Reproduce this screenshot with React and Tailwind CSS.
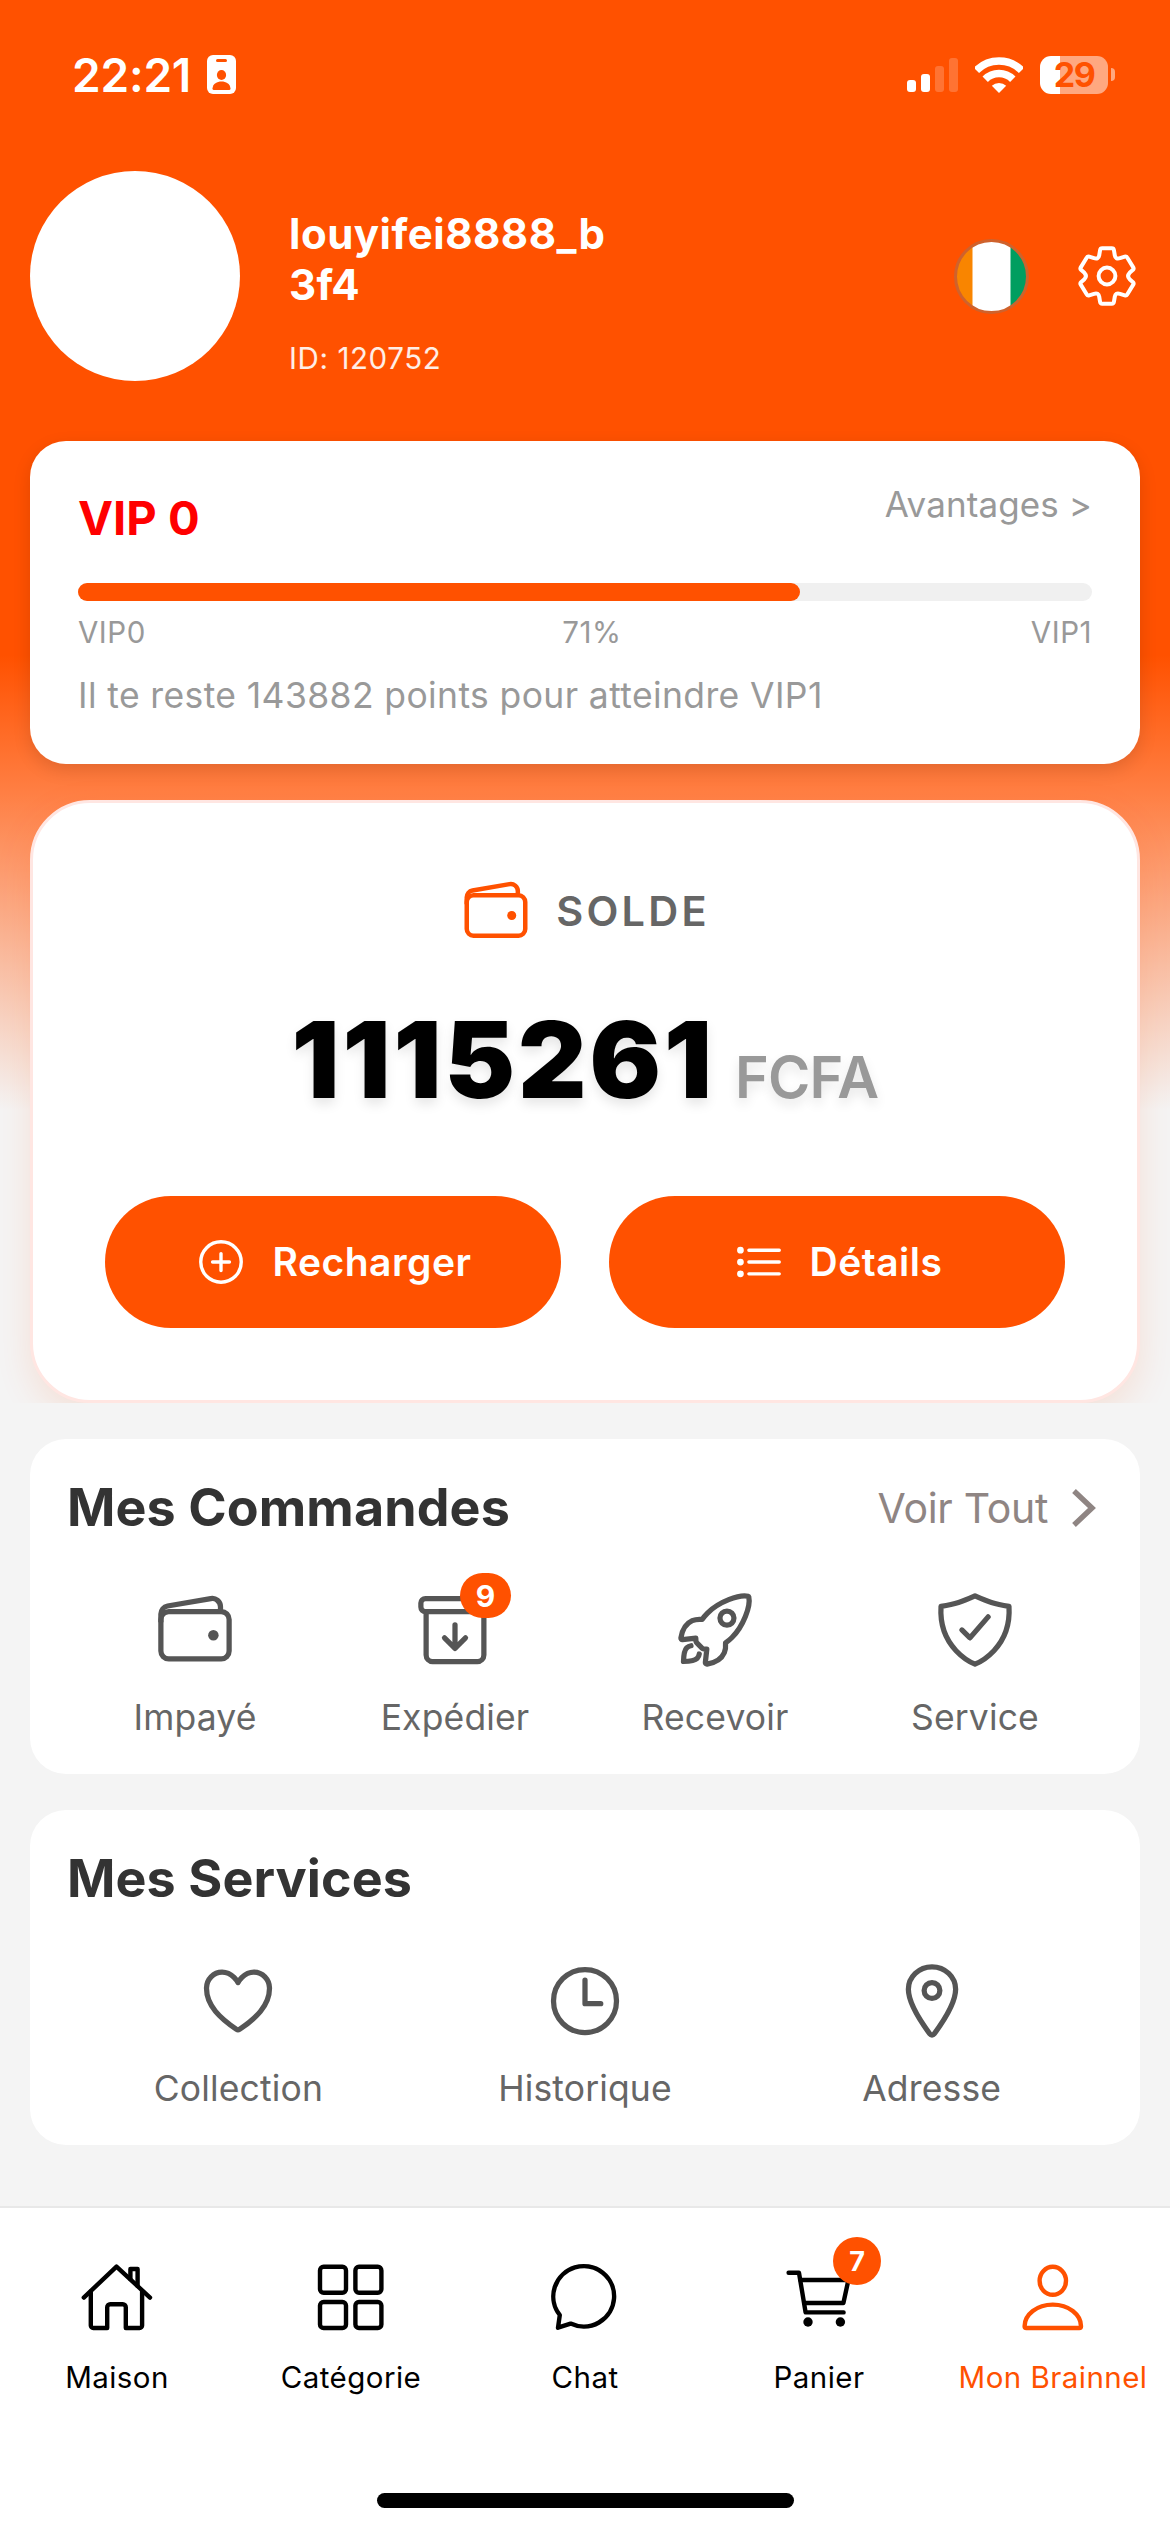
import React from 'react';
import {
  IoAddCircleOutline,
  IoArchiveOutline,
  IoHeartOutline,
  IoListOutline,
  IoLocationOutline,
  IoRocketOutline,
  IoShieldCheckmarkOutline,
  IoTimeOutline,
  IoWalletOutline,
} from 'react-icons/io5';

const user = {
  name: ['louyifei8888_b', '3f4'],
  id: 120752,
  balance: 1115261,
  currency: 'FCFA',
};

const vip = { level: 0, next: 1, percent: 71, remaining: 143882 };

const orders = [
  { label: 'Impayé', icon: IoWalletOutline },
  { label: 'Expédier', icon: IoArchiveOutline, badge: 9 },
  { label: 'Recevoir', icon: IoRocketOutline },
  { label: 'Service', icon: IoShieldCheckmarkOutline },
];

const services = [
  { label: 'Collection', icon: IoHeartOutline },
  { label: 'Historique', icon: IoTimeOutline },
  { label: 'Adresse', icon: IoLocationOutline },
];

function TabIcon({ children }) {
  return (
    <svg
      viewBox="0 0 72 72"
      className="size-[72px]"
      fill="none"
      stroke="currentColor"
      strokeWidth="4.4"
      strokeLinecap="round"
      strokeLinejoin="round"
    >
      {children}
    </svg>
  );
}

const tabs = [
  {
    label: 'Maison',
    icon: (
      <TabIcon>
        <path d="M2.8 35.6 35.5 4.6 69 35.6" />
        <path d="M9.8 29.5V63.5a2.5 2.5 0 0 0 2.5 2.5H26.2V45.3a3 3 0 0 1 3-3H41.8a3 3 0 0 1 3 3V66H58.6a2.5 2.5 0 0 0 2.5-2.5V29.5" />
        <path d="M49.4 17V7H56.6V24" />
      </TabIcon>
    ),
  },
  {
    label: 'Catégorie',
    icon: (
      <TabIcon>
        <rect x="5" y="4.8" width="26" height="26" rx="3.6" />
        <rect x="40.4" y="4.8" width="26" height="26" rx="3.6" />
        <rect x="5" y="40" width="26" height="26" rx="3.6" />
        <rect x="40.4" y="40" width="26" height="26" rx="3.6" />
      </TabIcon>
    ),
  },
  {
    label: 'Chat',
    icon: (
      <TabIcon>
        <path d="M10.8 53A30.4 30.2 0 1 1 21.6 61.6L9 65.7Z" />
      </TabIcon>
    ),
  },
  {
    label: 'Panier',
    badge: 7,
    icon: (
      <TabIcon>
        <path d="M5.6 10.8H16L22.6 50.4H60.6" />
        <path d="M17.4 18H65.4L60.4 41H21.2" />
        <circle cx="25" cy="60" r="4.7" fill="currentColor" stroke="none" />
        <circle cx="57.4" cy="60" r="4.7" fill="currentColor" stroke="none" />
      </TabIcon>
    ),
  },
  {
    label: 'Mon Brainnel',
    active: true,
    icon: (
      <TabIcon>
        <ellipse cx="35.8" cy="18.8" rx="13.2" ry="14" />
        <path d="M7.6 64.2C7.6 52.6 20 42.6 35.8 42.6S64 52.6 64 64.2A1.8 1.8 0 0 1 62.2 66H9.4A1.8 1.8 0 0 1 7.6 64.2Z" />
      </TabIcon>
    ),
  },
];

function StatusBar() {
  return (
    <div className="flex h-[149px] items-center pr-[55px] pl-[72px] text-white">
      <span className="w-[119px] text-[46px] leading-[56px] font-semibold tracking-[-0.2px]">22:21</span>
      <svg viewBox="0 0 29 39" className="ml-4 h-[39px] w-[29px]">
        <rect width="29" height="39" rx="6" fill="#fff" />
        <rect x="9" y="4" width="11" height="3" rx="1.5" fill="#ff5100" />
        <ellipse cx="14.5" cy="20" rx="4.6" ry="5" fill="#ff5100" />
        <path d="M5.5 33.5C6 28.5 10 26.5 14.5 26.5S23 28.5 23.5 33.5Q23.6 35 22 35H7Q5.4 35 5.5 33.5Z" fill="#ff5100" />
      </svg>
      <div className="ml-auto flex items-center">
        <div className="mt-px flex h-[34px] items-end gap-[5px]">
          <span className="h-3 w-[9px] rounded-[3px] bg-white" />
          <span className="h-[18px] w-[9px] rounded-[3px] bg-white" />
          <span className="h-[26px] w-[9px] rounded-[3px] bg-white/20" />
          <span className="h-[34px] w-[9px] rounded-[3px] bg-white/20" />
        </div>
        <svg viewBox="0 0 48 36" className="ml-[17px] h-9 w-12" fill="none" stroke="#fff">
          <path d="M1.4 13.4A32 32 0 0 1 46.6 13.4" strokeWidth="7.6" />
          <path d="M10.2 22.2A19.5 19.5 0 0 1 37.8 22.2" strokeWidth="7.6" />
          <path d="M24 36 16.8 28.8A10.4 10.4 0 0 1 31.2 28.8Z" fill="#fff" stroke="none" />
        </svg>
        <div className="ml-[17px] flex h-[38px] w-[68px] items-center justify-center rounded-[11px] bg-[linear-gradient(to_right,#fff_20px,#ffa880_20px)] text-[34px] leading-[38px] font-bold tracking-[-1.5px] text-[#ff5100]">
          29
        </div>
        <span className="ml-[3px] h-[13px] w-1 rounded-r-full bg-[#ffa880]" />
      </div>
    </div>
  );
}

function SettingsIcon() {
  return (
    <svg
      viewBox="0 0 60 62"
      className="ml-12 h-[62px] w-[60px]"
      fill="none"
      stroke="#fff"
      strokeWidth="4"
      strokeLinejoin="round"
    >
      <path d="M25.2 3.2H34.8Q36.6 3.2 36.9 5L37.8 10.4Q38.5 14.6 43 13.2L47.8 11.6Q49.4 11.1 50.2 12.5L56.4 22.6Q57 23.8 56 24.8L52.6 27.8Q49.6 31 52.6 34.2L56 37.2Q57 38.2 56.4 39.4L50.2 49.5Q49.4 50.9 47.8 50.4L43 48.8Q38.5 47.4 37.8 51.6L36.9 57Q36.6 58.8 34.8 58.8H25.2Q23.4 58.8 23.1 57L22.2 51.6Q21.5 47.4 17 48.8L12.2 50.4Q10.6 50.9 9.8 49.5L3.6 39.4Q3 38.2 4 37.2L7.4 34.2Q10.4 31 7.4 27.8L4 24.8Q3 23.8 3.6 22.6L9.8 12.5Q10.6 11.1 12.2 11.6L17 13.2Q21.5 14.6 22.2 10.4L23.1 5Q23.4 3.2 25.2 3.2Z" />
      <circle cx="30" cy="31" r="8.4" />
    </svg>
  );
}

function Profile() {
  return (
    <div className="mt-[22px] flex h-[210px] pr-[33px] pl-[30px] text-white">
      <div className="size-[210px] rounded-full bg-white" />
      <div className="ml-[49px] pt-[37px]">
        <div className="text-[42px] leading-[51px] font-bold tracking-[0.5px]">
          {user.name.map((line) => (
            <div key={line}>{line}</div>
          ))}
        </div>
        <div className="mt-[30px] text-[29.5px] leading-9 tracking-[0.6px] text-white/90">ID: {user.id}</div>
      </div>
      <div className="ml-auto flex items-center">
        <div className="size-[75px] rounded-full border-[3px] border-[#cf622c] bg-[linear-gradient(to_right,#f98500_15px,#fff_16px,#fff_53px,#009e60_54px)]" />
        <SettingsIcon />
      </div>
    </div>
  );
}

function VipCard() {
  return (
    <div className="mx-[30px] mt-[60px] h-[323px] rounded-[36px] bg-white px-12 pt-[42px] text-[#999] shadow-[0_6px_18px_rgba(0,0,0,0.12)]">
      <div className="flex h-[100px] items-start justify-between">
        <span className="mt-[7px] text-[47px] leading-[56px] font-bold text-[#ff0000]">VIP {vip.level}</span>
        <span className="text-[35px] leading-[42px] tracking-[0.1px]">Avantages &gt;</span>
      </div>
      <div className="h-[18px] rounded-full bg-[#f0f0f0]">
        <div className="h-full rounded-full bg-[#ff5100]" style={{ width: `${vip.percent + 0.2}%` }} />
      </div>
      <div className="mt-[13px] flex justify-between text-[29.5px] leading-9 tracking-[0.5px]">
        <span>VIP{vip.level}</span>
        <span className="pl-[7px]">{vip.percent}%</span>
        <span>VIP{vip.next}</span>
      </div>
      <div className="mt-[25px] text-[35.5px] leading-[42px] tracking-[0.38px]">
        Il te reste {vip.remaining} points pour atteindre VIP{vip.next}
      </div>
    </div>
  );
}

function BalanceCard() {
  return (
    <div className="mx-[30px] mt-9 h-[603px] rounded-[60px] border-[3px] border-[#ffe6e2] bg-white px-[72px] pt-[72px] shadow-[0_12px_36px_rgba(255,81,0,0.12)]">
      <div className="flex items-center justify-center">
        <IoWalletOutline className="size-[72px] text-[#ff5100]" />
        <span className="ml-6 text-[41.5px] leading-[50px] font-semibold tracking-[3.2px] text-[#666]">SOLDE</span>
      </div>
      <div className="mt-[49px] flex h-[127px] items-baseline justify-center text-shadow-[0_6px_12px_rgba(0,0,0,0.1)]">
        <span className="text-[106px] leading-[127px] font-black tracking-[3px] text-black">{user.balance}</span>
        <span className="ml-5 text-[57.5px] leading-[70px] font-semibold tracking-[-0.8px] text-[#999]">
          {user.currency}
        </span>
      </div>
      <div className="mt-[73px] grid grid-cols-2 gap-12 text-[39px] leading-[46px] font-semibold tracking-[0.5px] text-white">
        <button className="flex h-[132px] items-center justify-center gap-6 rounded-full bg-[#ff5100]">
          <IoAddCircleOutline className="size-[54px]" />
          Recharger
        </button>
        <button className="flex h-[132px] items-center justify-center gap-6 rounded-full bg-[#ff5100]">
          <IoListOutline className="size-[54px]" />
          Détails
        </button>
      </div>
    </div>
  );
}

function Section({ title, action, items, cols }) {
  return (
    <div className="mx-[30px] mt-9 h-[335px] rounded-[36px] bg-white px-[35px] pt-[39px]">
      <div className="flex h-[60px] items-center justify-between pr-[9px] pl-0.5">
        <h2 className="text-[52px] leading-[60px] font-bold tracking-[0.1px] text-[#333]">{title}</h2>
        {action}
      </div>
      <div className={`mt-[50px] grid ${cols}`}>
        {items.map(({ label, icon: Icon, badge }) => (
          <div key={label} className="flex flex-col items-center">
            <div className="relative">
              <Icon className="size-[84px] text-[#555]" />
              {badge && (
                <span className="absolute -top-[15px] left-[47px] flex h-[45px] w-[51px] items-center justify-center rounded-full bg-[#ff5100] text-[30px] leading-none font-bold text-white">
                  {badge}
                </span>
              )}
            </div>
            <span className="mt-[25px] text-[35.5px] leading-[42px] tracking-[0.15px] text-[#666]">{label}</span>
          </div>
        ))}
      </div>
    </div>
  );
}

function SeeAll() {
  return (
    <div className="flex items-center text-[41px] leading-[50px] tracking-[-0.3px] text-[#8f8583]">
      Voir Tout
      <svg viewBox="0 0 24 38" className="ml-6 h-[38px] w-6" fill="none" stroke="currentColor" strokeWidth="5.4">
        <path d="M2 2 20 19 2 36" />
      </svg>
    </div>
  );
}

function TabBar() {
  return (
    <div className="mt-auto flex h-[326px] flex-col border-t-2 border-[#e8e8e8] bg-white pt-[54px] pb-6">
      <div className="grid grid-cols-5">
        {tabs.map(({ label, icon, badge, active }) => (
          <div key={label} className={`flex flex-col items-center ${active ? 'text-[#ff5100]' : 'text-black'}`}>
            <div className="relative">
              {icon}
              {badge && (
                <span className="absolute -top-[25px] left-[50px] flex size-12 items-center justify-center rounded-full bg-[#ff5100] text-[27px] leading-none font-bold text-white">
                  {badge}
                </span>
              )}
            </div>
            <span className="mt-[25px] text-[29.5px] leading-9 tracking-[0.45px] whitespace-nowrap">{label}</span>
          </div>
        ))}
      </div>
      <div className="mx-auto mt-auto h-[15px] w-[417px] rounded-full bg-black" />
    </div>
  );
}

export default function App() {
  return (
    <div className="flex h-[2532px] w-[1170px] flex-col overflow-hidden bg-[#f4f4f4] font-['Inter','Roboto',sans-serif]">
      <div className="h-[1403px] shrink-0 overflow-hidden bg-[linear-gradient(to_bottom,#ff5100_655px,#ff7e42_790px,#f4f4f4_1110px)]">
        <StatusBar />
        <Profile />
        <VipCard />
        <BalanceCard />
      </div>
      <Section title="Mes Commandes" action={<SeeAll />} items={orders} cols="grid-cols-4" />
      <Section title="Mes Services" items={services} cols="grid-cols-3" />
      <TabBar />
    </div>
  );
}
